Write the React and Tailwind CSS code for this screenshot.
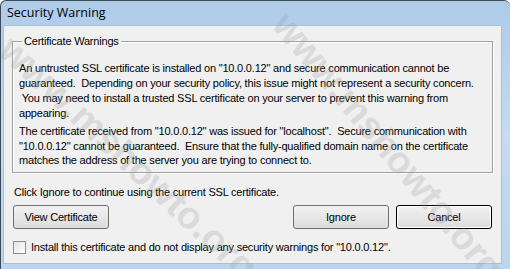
export default function App() {
  const para1 = [
    'An untrusted SSL certificate is installed on "10.0.0.12" and secure communication cannot be',
    'guaranteed.  Depending on your security policy, this issue might not represent a security concern.',
    ' You may need to install a trusted SSL certificate on your server to prevent this warning from',
    'appearing.',
  ];
  const para2 = [
    'The certificate received from "10.0.0.12" was issued for "localhost".  Secure communication with',
    '"10.0.0.12" cannot be guaranteed.  Ensure that the fully-qualified domain name on the certificate',
    'matches the address of the server you are trying to connect to.',
  ];

  return (
    <div className="relative w-[510px] h-[269px] overflow-hidden bg-white">
      <div className="flex flex-col w-[510px] h-[269px] rounded-t-[6px] border-t border-l border-[#3c4a58] bg-gradient-to-b from-[#aecbe8] via-[#c4dbf1] to-[#bcd5ee]">
        {/* title bar */}
        <div className="h-[24px] flex items-center pl-[6px] text-[12.5px] text-black font-['Open_Sans',sans-serif]">
          Security Warning
        </div>

        {/* client area */}
        <div className="flex-1 ml-[2px] mr-[8px] mb-[5px] bg-[#f0f0f0] border border-[#a9bfd6] font-['Liberation_Sans',sans-serif] text-[11px] tracking-[-0.2px] text-black">
          <fieldset className="mx-[8px] mt-[8px] h-[139px] border border-[#a0a0a0] shadow-[inset_1px_1px_0_#fff,1px_1px_0_#fff] px-[6px]">
            <legend className="ml-[3px] px-[2px] leading-[14px]">Certificate Warnings</legend>
            <div className="mt-[13px] leading-[15px]">
              {para1.map((l, i) => (
                <div key={i} className="whitespace-pre">{l}</div>
              ))}
            </div>
            <div className="mt-[3px] leading-[14.5px]">
              {para2.map((l, i) => (
                <div key={i} className="whitespace-pre">{l}</div>
              ))}
            </div>
          </fieldset>

          <div className="mt-[12px] ml-[10px] leading-[14px]">
            Click Ignore to continue using the current SSL certificate.
          </div>

          <div className="flex mt-[6px] px-[9px]">
            <button className="w-[96px] h-[24px] rounded-[3px] border border-[#707070] bg-gradient-to-b from-[#f2f2f2] to-[#dcdcdc]">
              View Certificate
            </button>
            <div className="flex-1" />
            <button className="w-[96px] h-[24px] rounded-[3px] border border-[#707070] bg-gradient-to-b from-[#f2f2f2] to-[#dcdcdc]">
              Ignore
            </button>
            <button className="ml-[7px] w-[96px] h-[24px] rounded-[3px] border border-black bg-gradient-to-b from-[#f2f2f2] to-[#dcdcdc] shadow-[inset_0_0_0_1px_#fff]">
              Cancel
            </button>
          </div>

          <div className="flex items-center mt-[11px] ml-[9px]">
            <div className="w-[13px] h-[13px] border border-[#8f8f8f] bg-gradient-to-br from-[#e4e4e4] to-white" />
            <span className="ml-[5px] leading-[14px]">
              Install this certificate and do not display any security warnings for "10.0.0.12".
            </span>
          </div>
        </div>
      </div>

      {/* watermark */}
      <div className="pointer-events-none absolute left-[-40px] top-[130px] rotate-[43deg] text-[38px] font-bold text-[#9a9a9a] opacity-25 font-['Liberation_Sans',sans-serif] whitespace-nowrap">
        www.mshowto.org
      </div>
      <div className="pointer-events-none absolute left-[220px] top-[118px] rotate-[50deg] text-[38px] font-bold text-[#9a9a9a] opacity-25 font-['Liberation_Sans',sans-serif] whitespace-nowrap">
        www.mshowto.org
      </div>
    </div>
  );
}
